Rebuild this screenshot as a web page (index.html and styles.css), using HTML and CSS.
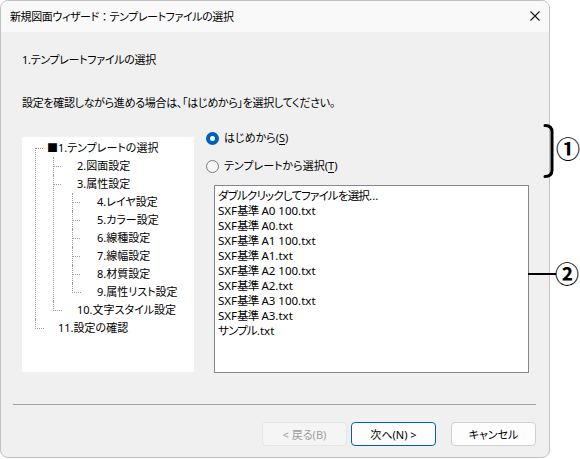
FILE: index.html
```html
<!DOCTYPE html>
<html lang="ja">
<head>
  <meta charset="UTF-8">
  <title>新規図面ウィザード</title>
  <link rel="stylesheet" href="styles.css">
</head>
<body>

<div class="stage">
  <div class="dialog">
    <div class="titlebar">
      <span class="title">新規図面ウィザード<span class="colon">：</span>テンプレートファイルの選択</span>
      <svg class="close" width="10" height="10" viewBox="0 0 10 10">
        <path d="M0.5 0.5 L9.5 9.5 M9.5 0.5 L0.5 9.5" stroke="#1a1a1a" stroke-width="1.1" fill="none"/>
      </svg>
    </div>

    <div class="body">
      <p class="step">1.テンプレートファイルの選択</p>
      <p class="hint">設定を確認しながら進める場合は、「はじめから」を選択してください。</p>

      <div class="main">
        <!-- wizard steps -->
        <div class="tree">
          <ul class="tree-root">
            <li><span class="label">■1.テンプレートの選択</span>
              <ul>
                <li><span class="label">2.図面設定</span></li>
                <li><span class="label">3.属性設定</span>
                  <ul>
                    <li><span class="label">4.レイヤ設定</span></li>
                    <li><span class="label">5.カラー設定</span></li>
                    <li><span class="label">6.線種設定</span></li>
                    <li><span class="label">7.線幅設定</span></li>
                    <li><span class="label">8.材質設定</span></li>
                    <li><span class="label">9.属性リスト設定</span></li>
                  </ul>
                </li>
                <li><span class="label">10.文字スタイル設定</span></li>
              </ul>
            </li>
            <li class="tail"><span class="label">11.設定の確認</span></li>
          </ul>
        </div>

        <!-- template source -->
        <div class="source">
          <label class="radio checked"><span class="dot"></span>はじめから(<u>S</u>)</label>
          <label class="radio"><span class="dot"></span>テンプレートから選択(<u>T</u>)</label>
          <div class="listbox">
            <div class="item"><span class="jp">ダブルクリックしてファイルを選択</span>...</div>
            <div class="item">SXF<span class="jp">基準</span> A0 100.txt</div>
            <div class="item">SXF<span class="jp">基準</span> A0.txt</div>
            <div class="item">SXF<span class="jp">基準</span> A1 100.txt</div>
            <div class="item">SXF<span class="jp">基準</span> A1.txt</div>
            <div class="item">SXF<span class="jp">基準</span> A2 100.txt</div>
            <div class="item">SXF<span class="jp">基準</span> A2.txt</div>
            <div class="item">SXF<span class="jp">基準</span> A3 100.txt</div>
            <div class="item">SXF<span class="jp">基準</span> A3.txt</div>
            <div class="item"><span class="jp">サンプル</span>.txt</div>
          </div>
        </div>
      </div>
    </div>

    <div class="footer">
      <div class="sep"></div>
      <div class="buttons">
        <button class="btn back" disabled>&lt; 戻る(B)</button>
        <button class="btn next">次へ(N) &gt;</button>
        <button class="btn cancel">キャンセル</button>
      </div>
    </div>
  </div>

  <!-- callouts -->
  <svg class="brace" width="14" height="58" viewBox="0 0 14 58">
    <path d="M3 3.5 Q10 3.5 10 10 V48 Q10 54.5 3 54.5" stroke="#000" stroke-width="3" fill="none" stroke-linecap="round"/>
  </svg>
  <span class="mark mark-1">①</span>
  <span class="leader"></span>
  <span class="mark mark-2">②</span>
</div>

</body>
</html>
```

FILE: styles.css
```css
body {
  margin: 0;
  background: #ffffff;
  font-family: "Noto Sans", "Noto Sans CJK JP", sans-serif;
  font-size: 11px;
  font-feature-settings: "palt";
  color: #000;
}
.stage {
  position: relative;
  width: 580px;
  height: 459px;
}
.dialog {
  box-sizing: border-box;
  width: 550px;
  height: 458px;
  border: 1px solid #c2c2c2;
  border-radius: 8px;
  background: #f0f0f0;
  overflow: hidden;
  display: flex;
  flex-direction: column;
}
.titlebar {
  height: 31px;
  flex: none;
  background: #f9f9f9;
  display: flex;
  align-items: center;
  justify-content: space-between;
  padding: 0 9px 0 9px;
}
.title {
  line-height: 16px;
  letter-spacing: -0.4px;
}
.title .colon {
  font-feature-settings: normal;
}
.close {
  margin-top: -1px;
}
.body {
  padding-left: 21px;
}
.step {
  margin: 20px 0 0;
  line-height: 16px;
  letter-spacing: -0.3px;
}
.hint {
  margin: 27px 0 0;
  line-height: 16px;
  letter-spacing: -0.3px;
}
.main {
  margin-top: 19px;
  display: flex;
}

/* step tree */
.tree {
  margin-top: 7px;
  width: 172px;
  height: 235px;
  background: #fff;
  padding-top: 2px;
  box-sizing: border-box;
}
.tree ul {
  list-style: none;
  margin: 0;
  padding: 0;
}
.tree li {
  position: relative;
}
.tree li::before {
  content: "";
  position: absolute;
  left: 0;
  top: 0;
  width: 8px;
  height: 9px;
  border-bottom: 1px dotted #9a9a9a;
}
.tree li:last-child::before {
  border-left: 1px dotted #9a9a9a;
}
.tree li:not(:last-child)::after {
  content: "";
  position: absolute;
  left: 0;
  top: 0;
  bottom: 0;
  border-left: 1px dotted #9a9a9a;
}
.tree-root > li:first-child::after {
  top: 9px;
}
.label {
  display: block;
  height: 18px;
  line-height: 18px;
  white-space: nowrap;
}
.tree-root {
  margin-left: 13px !important;
}
.tree-root > li {
  padding-left: 12px;
}
.tree-root > li.tail {
  padding-left: 23px;
}
.tree-root > li > ul {
  margin-left: 6px;
}
.tree-root > li > ul > li {
  padding-left: 24px;
}
.tree-root > li > ul > li > ul {
  margin-left: -5px;
}
.tree-root > li > ul > li > ul > li {
  padding-left: 25px;
}

/* radio + list */
.source {
  margin-left: 12px;
  display: flex;
  flex-direction: column;
}
.radio {
  display: flex;
  align-items: center;
  height: 16px;
  line-height: 16px;
  white-space: nowrap;
}
.radio + .radio {
  margin-top: 12px;
}
.radio u {
  text-underline-offset: 2px;
}
.dot {
  box-sizing: border-box;
  width: 13px;
  height: 13px;
  border-radius: 50%;
  border: 1px solid #7a7a7a;
  background: #f7f7f7;
  margin-right: 5px;
  flex: none;
}
.radio.checked .dot {
  border: 4px solid #005fb8;
  background: #fff;
}
.listbox {
  box-sizing: border-box;
  margin: 11px 0 0 8px;
  width: 315px;
  height: 188px;
  background: #fff;
  border: 1px solid #828790;
  padding: 2px 0 0 3px;
  font-size: 11.5px;
}
.item {
  height: 15px;
  line-height: 15px;
  white-space: nowrap;
}
.item .jp {
  letter-spacing: -0.8px;
}

/* footer */
.footer {
  margin-top: auto;
  height: 53px;
  padding: 0 13px 0 12px;
  flex: none;
}
.sep {
  height: 1px;
  background: #a0a0a0;
}
.buttons {
  margin-top: 17px;
  display: flex;
  justify-content: flex-end;
}
.btn {
  box-sizing: border-box;
  width: 85px;
  height: 24px;
  font-family: inherit;
  font-size: 11px;
  font-feature-settings: "palt";
  background: #fdfdfd;
  border: 1px solid #d0d0d0;
  border-radius: 4px;
  color: #000;
  padding: 0;
}
.btn.back {
  background: #f5f5f5;
  border-color: #e5e5e5;
  color: #9d9d9d;
}
.btn.next {
  margin-left: 4px;
  border-color: #005fb8;
}
.btn.cancel {
  margin-left: 15px;
}

/* callouts */
.brace {
  position: absolute;
  left: 542px;
  top: 122px;
}
.mark {
  position: absolute;
  font-family: "Noto Sans CJK JP", sans-serif;
  font-size: 24px;
  font-weight: bold;
  line-height: 24px;
}
.mark-1 {
  left: 556px;
  top: 136px;
}
.mark-2 {
  left: 555px;
  top: 261px;
}
.leader {
  position: absolute;
  left: 528px;
  top: 273px;
  width: 28px;
  height: 2px;
  background: #000;
}
```
